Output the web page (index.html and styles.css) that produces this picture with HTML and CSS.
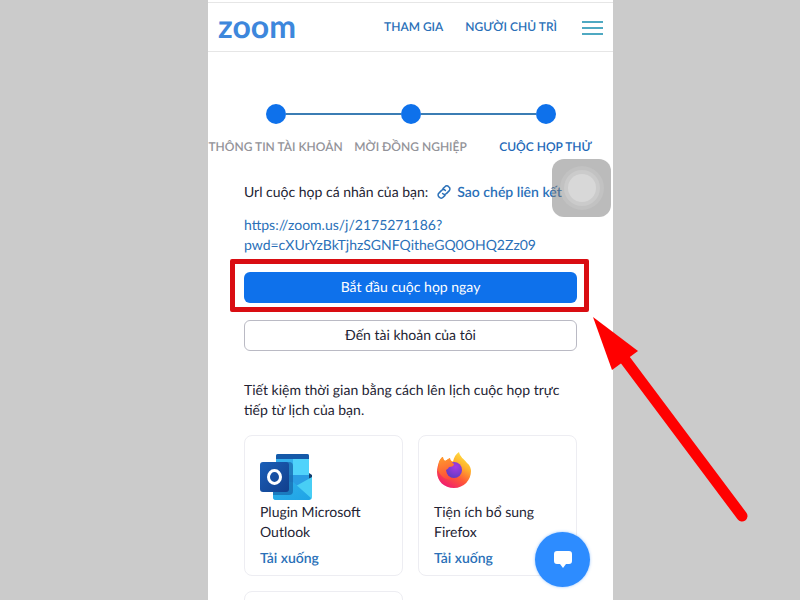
FILE: index.html
```html
<!DOCTYPE html>
<html lang="vi">

<head>
    <meta charset="UTF-8">
    <meta name="viewport" content="width=device-width, initial-scale=1.0">
    <title>Zoom - Cuộc họp thử</title>
    <link rel="stylesheet" href="styles.css">
</head>

<body>
    <div class="phone">
        <header class="topbar">
            <a class="logo" href="#">zoom</a>
            <nav class="nav">
                <a href="#">THAM GIA</a>
                <a href="#">NGƯỜI CHỦ TRÌ</a>
            </nav>
            <button class="menu-btn" type="button" aria-label="Menu">
                <span></span>
                <span></span>
                <span></span>
            </button>
        </header>

        <ol class="steps">
            <li class="step">THÔNG TIN TÀI KHOẢN</li>
            <li class="step">MỜI ĐỒNG NGHIỆP</li>
            <li class="step active">CUỘC HỌP THỬ</li>
        </ol>

        <main class="content">
            <div class="url-row">
                <span>Url cuộc họp cá nhân của bạn:</span>
                <a class="copy-link" href="#">
                    <svg width="14" height="14" viewBox="0 0 14 14" fill="none" stroke="currentColor" stroke-width="1.5" stroke-linecap="round">
                        <path d="M6 3.6 L7.9 1.7 a2.6 2.6 0 0 1 3.8 0 l.4 .4 a2.6 2.6 0 0 1 0 3.8 L9.4 8.6 a2.6 2.6 0 0 1 -3.8 0" />
                        <path d="M8 10.4 L6.1 12.3 a2.6 2.6 0 0 1 -3.8 0 l-.4 -.4 a2.6 2.6 0 0 1 0 -3.8 L4.6 5.4 a2.6 2.6 0 0 1 3.8 0" />
                    </svg>
                    Sao chép liên kết
                </a>
            </div>
            <a class="meeting-url" href="#">https://zoom.us/j/2175271186?<br>pwd=cXUrYzBkTjhzSGNFQitheGQ0OHQ2Zz09</a>

            <div class="start">
                <button class="btn primary" type="button">Bắt đầu cuộc họp ngay</button>
                <div class="highlight"></div>
            </div>
            <button class="btn" type="button">Đến tài khoản của tôi</button>

            <p class="note">Tiết kiệm thời gian bằng cách lên lịch cuộc họp trực tiếp từ lịch của bạn.</p>

            <div class="cards">
                <section class="card">
                    <svg class="card-icon" width="54" height="50" viewBox="0 0 54 50">
                        <defs>
                            <linearGradient id="tile" x1="0" y1="0" x2="1" y2="1">
                                <stop offset="0" stop-color="#1b5fb8" />
                                <stop offset="1" stop-color="#123f8c" />
                            </linearGradient>
                            <linearGradient id="flap" x1="0" y1="0" x2="1" y2="1">
                                <stop offset="0" stop-color="#2fb0ea" />
                                <stop offset="1" stop-color="#1fa4e6" />
                            </linearGradient>
                        </defs>
                        <path d="M16 4 a2 2 0 0 1 2 -2 h29 a2 2 0 0 1 2 2 v34 H16z" fill="#2a9de4" />
                        <path d="M16 7 V4 a2 2 0 0 1 2 -2 h29 a2 2 0 0 1 2 2 v3z" fill="#1559a8" />
                        <path d="M16 7 h17 v16 H16z" fill="#36b0ee" />
                        <path d="M33 7 h16 v16 H33z" fill="#50d3fb" />
                        <path d="M49 21 l3 2 v3 l-3 1z" fill="#123f70" />
                        <path d="M13 36 L36 34 L52 25 v20 a3 3 0 0 1 -3 3 H16 a3 3 0 0 1 -3 -3z" fill="#48cef5" />
                        <path d="M13 30 h20 L51 46 a3 3 0 0 1 -2 2 H16 a3 3 0 0 1 -3 -3z" fill="url(#flap)" />
                        <path d="M16 10 h13 a4 4 0 0 1 4 4 v25 a4 4 0 0 1 -4 4 H13 v-3z" fill="#10549a" opacity=".55" />
                        <rect x="0" y="10" width="29" height="30" rx="3" fill="url(#tile)" />
                        <ellipse cx="14.500" cy="25" rx="6" ry="6.500" fill="none" stroke="#fff" stroke-width="3" />
                    </svg>
                    <h2>Plugin Microsoft Outlook</h2>
                    <a href="#">Tải xuống</a>
                </section>
                <section class="card">
                    <svg class="card-icon" width="54" height="50" viewBox="0 0 54 50">
                        <defs>
                            <linearGradient id="fox" x1=".9" y1="0" x2=".3" y2="1">
                                <stop offset="0" stop-color="#fff04a" />
                                <stop offset=".35" stop-color="#ffb22c" />
                                <stop offset=".65" stop-color="#ff5a35" />
                                <stop offset="1" stop-color="#f01a72" />
                            </linearGradient>
                            <linearGradient id="face" x1=".3" y1="0" x2=".5" y2="1">
                                <stop offset="0" stop-color="#ff9a2c" />
                                <stop offset="1" stop-color="#ff4b3c" />
                            </linearGradient>
                            <radialGradient id="globe" cx=".6" cy=".3" r=".8">
                                <stop offset="0" stop-color="#a83be0" />
                                <stop offset="1" stop-color="#5b3bc0" />
                            </radialGradient>
                        </defs>
                        <path d="M5 10 C6 7 8 5 9 5 C9 7 10 8 11 9 C13 8 14 7 16 6 C16 8 17 9 19 9.500 C20 5 22 2 25 0 C26 5 30 7 33 11 C36 13 37 17 37 19 C37 28 30 36 20 36 C10 36 3 29 3 20 C3 16 4 13 5 10z" fill="url(#fox)" />
                        <circle cx="20" cy="18" r="8" fill="url(#globe)" />
                        <path d="M5 10 C6 7 8 5 9 5 C9 7 10 8 11 9 C13 8 14 7 16 6 C16 8 17 10 20 12 C20 14 18 15 15 15 C14 17 13 17 12 18 C12 22 15 26 20 27 C14 29 7 26 4 18z" fill="url(#face)" />
                    </svg>
                    <h2>Tiện ích bổ sung Firefox</h2>
                    <a href="#">Tải xuống</a>
                </section>
                <section class="card"></section>
            </div>
        </main>

        <button class="assistive" type="button" aria-label="AssistiveTouch"><span></span></button>

        <button class="chat" type="button" aria-label="Chat">
            <svg width="18" height="17" viewBox="0 0 18 17">
                <path d="M3 0 h12 a3 3 0 0 1 3 3 v7 a3 3 0 0 1 -3 3 h-3 l-3 4 -3 -4 H3 a3 3 0 0 1 -3 -3 V3 a3 3 0 0 1 3 -3z" fill="#fff" />
            </svg>
        </button>

        <svg class="arrow" width="156" height="206" viewBox="0 0 156 206">
            <path d="M30 40 L149 199" stroke="#ff0000" stroke-width="11" stroke-linecap="round" />
            <path d="M0 0 L45 34 L19 53z" fill="#ff0000" />
        </svg>
    </div>
</body>

</html>
```

FILE: styles.css
```css
* {
    margin: 0;
    padding: 0;
    box-sizing: border-box;
}

body {
    font-family: Lato, 'Open Sans', sans-serif;
    font-size: 14px;
    line-height: 20px;
    text-rendering: geometricPrecision;
    color: #232333;
    background: #cbcbcb;
    padding-left: 21px;
}

a {
    color: #2a70b8;
    text-decoration: none;
}

button {
    font: inherit;
    color: inherit;
    text-rendering: inherit;
    cursor: pointer;
}

.phone {
    position: relative;
    width: 100%;
    max-width: 405px;
    height: 100vh;
    margin: 0 auto;
    padding-top: 2px;
    background: #fff;
}

/* Header */
.topbar {
    display: flex;
    align-items: center;
    height: 50px;
    padding: 0 10px;
    border-top: 1px solid #e6e6e6;
    border-bottom: 1px solid #e6e6e6;
}

.logo {
    font-size: 32px;
    font-weight: bold;
    line-height: 40px;
    color: #3d87dc;
    padding-bottom: 2px;
}

.nav {
    display: flex;
    gap: 22px;
    margin-left: auto;
    font-size: 12px;
    font-weight: 600;
}

.menu-btn {
    display: flex;
    flex-direction: column;
    gap: 4px;
    margin-left: 25px;
    padding-top: 2px;
    border: none;
    background: none;
}

.menu-btn span {
    width: 21px;
    height: 2px;
    background: #4fa9c2;
}

/* Progress steps */
.steps {
    display: grid;
    grid-template-columns: repeat(3, 1fr);
    margin-top: 52px;
    list-style: none;
}

.step {
    position: relative;
    padding-top: 33px;
    font-size: 12px;
    font-weight: 600;
    text-align: center;
    white-space: nowrap;
    color: #939399;
}

.step::before {
    content: "";
    position: absolute;
    top: 0;
    left: calc(50% - 10px);
    width: 20px;
    height: 20px;
    border-radius: 50%;
    background: #0e71eb;
}

.step + .step::after {
    content: "";
    position: absolute;
    top: 9px;
    right: calc(50% + 10px);
    width: calc(100% - 20px);
    height: 2px;
    background: #3b7db4;
}

.step.active {
    color: #2268b8;
}

/* Content */
.content {
    height: calc(100vh - 157px);
    padding: 25px 36px 0;
    overflow: hidden;
}

.url-row {
    display: flex;
    gap: 9px;
    white-space: nowrap;
}

.copy-link {
    display: flex;
    align-items: center;
    gap: 6px;
    font-weight: 600;
}

.meeting-url {
    display: block;
    margin-top: 13px;
}

.start {
    position: relative;
    margin: 17px 0;
}

.btn {
    display: block;
    width: 100%;
    height: 31px;
    padding-bottom: 2px;
    border: 1px solid #babac4;
    border-radius: 6px;
    background: #fff;
}

.btn.primary {
    border: none;
    color: #fff;
    background: #0e71eb;
}

.highlight {
    position: absolute;
    inset: -13px -12px -9px -14px;
    border: 5px solid #d90d12;
    border-radius: 2px;
    pointer-events: none;
}

.note {
    margin-top: 29px;
}

.cards {
    display: grid;
    grid-template-columns: 1fr 1fr;
    gap: 15px;
    margin-top: 15px;
}

.card {
    min-height: 141px;
    padding: 16px 15px 0;
    border: 1px solid #ededf2;
    border-radius: 8px;
}

.card-icon {
    display: block;
}

.card h2 {
    font-size: 14px;
    font-weight: normal;
}

.card a {
    display: block;
    margin-top: 6px;
    font-weight: 600;
}

/* Floating items */
.assistive {
    position: absolute;
    top: 159px;
    right: 2px;
    display: grid;
    place-items: center;
    width: 59px;
    height: 58px;
    border: none;
    border-radius: 12px;
    background: rgba(120, 120, 120, 0.5);
}

.assistive span {
    width: 28px;
    height: 28px;
    border-radius: 50%;
    background: #d8d8d8;
    box-shadow: 0 0 0 4px rgba(255, 255, 255, 0.15), 0 0 0 8px rgba(255, 255, 255, 0.1);
}

.chat {
    position: absolute;
    right: 23px;
    bottom: 13px;
    display: grid;
    place-items: center;
    width: 55px;
    height: 55px;
    border: none;
    border-radius: 50%;
    background: #2d8cff;
    box-shadow: 0 0 3px rgba(45, 140, 255, 0.5);
}

.arrow {
    position: absolute;
    top: 317px;
    left: 385px;
}
```
